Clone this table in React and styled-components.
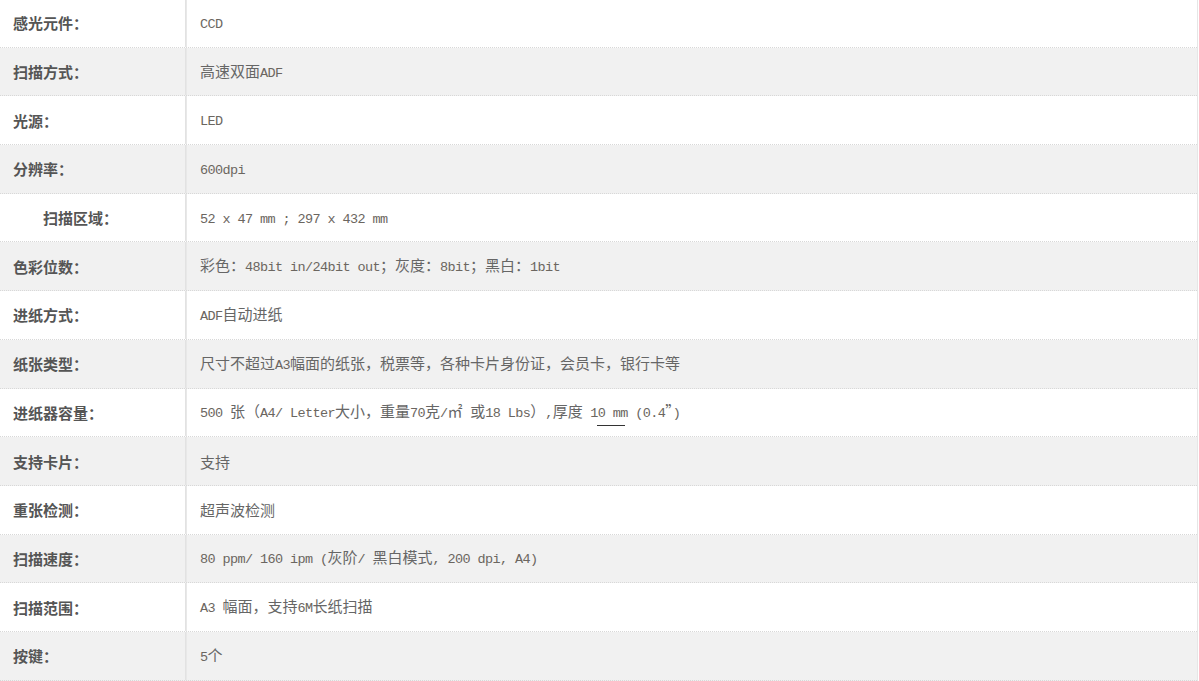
import React from "react";
import styled, { createGlobalStyle } from "styled-components";

const Global = createGlobalStyle`
  html, body { margin: 0; padding: 0; background: #fff; }
  body { font-family: "Noto Sans CJK SC", sans-serif; }
`;

const Table = styled.div`
  width: 1197px;
  border-right: 1px solid #e6e6e6;
  margin-top: -1px;
`;

const Row = styled.div`
  display: grid;
  grid-template-columns: 186px 1fr;
  height: 47.7px;
  border-bottom: 1px dotted #d8d8d8;
  background: ${(p) => (p.$alt ? "#f1f1f1" : "#ffffff")};
`;

const Label = styled.div`
  display: flex;
  align-items: center;
  padding-left: ${(p) => (p.$indent ? "43px" : "13px")};
  border-right: 1px solid #e2e2e2;
  font-family: "Noto Sans CJK SC", sans-serif;
  font-weight: 700;
  font-size: 15px;
  color: #555;
`;

const Value = styled.div`
  display: flex;
  align-items: center;
  padding-left: 13px;
  border-left: 1px solid #e8e8e8;
`;

const Line = styled.span`
  display: block;
  font-family: "Noto Sans CJK SC", sans-serif;
  font-size: 15px;
  line-height: 20px;
  color: #666;
  white-space: pre;
  padding-top: 1px;
`;

const Seg = styled.span`
  font-family: ${(p) => (p.$latin ? '"Liberation Mono", monospace' : '"Noto Sans CJK SC", sans-serif')};
  font-size: ${(p) => (p.$latin ? "13.5px" : "15px")};
  letter-spacing: ${(p) => (p.$latin ? "-0.6px" : "0")};
  color: ${(p) => (p.$latin ? "#6b6660" : "#666")};
`;

const Under = styled.span`
  position: relative;
  &::after {
    content: "";
    position: absolute;
    left: 7px;
    width: 28px;
    bottom: -5px;
    height: 1px;
    background: #333;
  }
`;

function Text({ s }) {
  const parts = s.match(/[\x20-\x7e]+|[^\x20-\x7e]+/g) || [];
  return parts.map((p, i) => (
    <Seg key={i} $latin={/^[\x20-\x7e]/.test(p)}>
      {p}
    </Seg>
  ));
}

const rows = [
  ["感光元件：", "CCD"],
  ["扫描方式：", "高速双面ADF"],
  ["光源：", "LED"],
  ["分辨率：", "600dpi"],
  ["扫描区域：", "52 x 47 mm ; 297 x 432 mm", true],
  ["色彩位数：", "彩色：48bit in/24bit out；灰度：8bit；黑白：1bit"],
  ["进纸方式：", "ADF自动进纸"],
  ["纸张类型：", "尺寸不超过A3幅面的纸张，税票等，各种卡片身份证，会员卡，银行卡等"],
  ["进纸器容量：", null],
  ["支持卡片：", "支持"],
  ["重张检测：", "超声波检测"],
  ["扫描速度：", "80 ppm/ 160 ipm (灰阶/ 黑白模式, 200 dpi, A4)"],
  ["扫描范围：", "A3 幅面，支持6M长纸扫描"],
  ["按键：", "5个"],
];

export default function App() {
  return (
    <>
      <Global />
      <Table>
        {rows.map(([label, value, indent], i) => (
          <Row key={i} $alt={i % 2 === 1}>
            <Label $indent={indent}>{label}</Label>
            <Value>
              <Line>
                {value !== null ? (
                  <Text s={value} />
                ) : (
                  <>
                    <Text s="500 张（A4/ Letter大小，重量70克/㎡ 或18 Lbs）,厚度 " />
                    <Under>
                      <Text s="10 mm" />
                    </Under>
                    <Text s=" (0.4”)" />
                  </>
                )}
              </Line>
            </Value>
          </Row>
        ))}
      </Table>
    </>
  );
}
